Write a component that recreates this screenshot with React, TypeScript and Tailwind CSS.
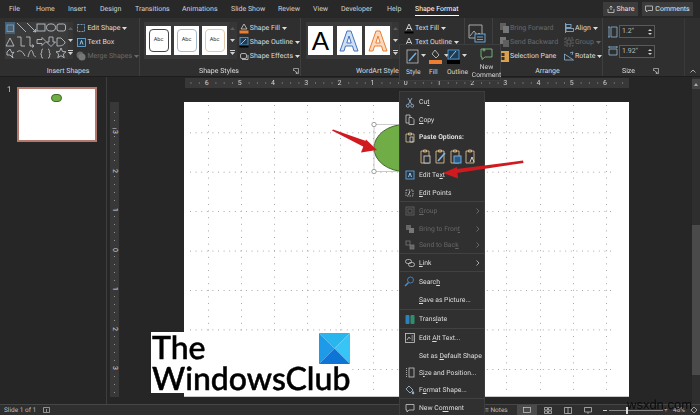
import React from "react";

const tabs = [
  { t: "File", c: "w-[36px] pl-[9px]" },
  { t: "Home", c: "w-[32px]" },
  { t: "Insert", c: "w-[32px]" },
  { t: "Design", c: "w-[35px]" },
  { t: "Transitions", c: "w-[47px]" },
  { t: "Animations", c: "w-[49px]" },
  { t: "Slide Show", c: "w-[47px]" },
  { t: "Review", c: "w-[35px]" },
  { t: "View", c: "w-[28px]" },
  { t: "Developer", c: "w-[46px]" },
  { t: "Help", c: "w-[28px]" },
];

function Gallery() {
  const s = "#b9c0c6";
  return (
    <svg width="63" height="37" viewBox="0 0 63 37" fill="none" stroke={s} strokeWidth="0.9">
      <rect x="0" y="0" width="10" height="12" fill="#4a5f70" stroke="none" />
      <rect x="2" y="3" width="6.5" height="6.5" stroke="#5ba3dc" />
      <path d="M12 1l9 9" />
      <path d="M22 1l9 9M31 10l-3-.6M31 10l-.6-3" />
      <rect x="32" y="2" width="8" height="7" />
      <ellipse cx="46" cy="5.5" rx="4.5" ry="3.6" />
      <rect x="52" y="2" width="8.5" height="7" rx="2" />
      <path d="M1 24l4-8 4 8z" />
      <path d="M12 15h4v9h4" />
      <path d="M21 15h4v9h4M29 24l-2-1.5M29 24l-2 1.5" />
      <path d="M32 17.5h5v-2l4 4-4 4v-2h-5z" />
      <path d="M44 15h4v5h2.5l-4.5 4.5L41.5 20H44z" />
      <path d="M52 24v-8h4l4 4v1c-2 3-5 3-8 3z" />
      <path d="M2 30l3-3 2 4 2-1-2 3 1 3-3-3-3 0z" />
      <path d="M12 30c2-2 5-2 8 4" />
      <path d="M23 35c2-8 4-8 5-4s2 3 3 4" />
      <path d="M38 27c-2 0-1 3-1.500 4s-1 1-1 1 1 0 1 1-.5 3 1.500 3" />
      <path d="M43 27c2 0 1 3 1.500 4s1 1 1 1-1 0-1 1 .5 3-1.500 3" />
      <path d="M56 26l1.500 3.500 3.500.3-2.700 2.300.9 3.600-3.200-2-3.200 2 .9-3.600-2.700-2.300 3.500-.3z" />
    </svg>
  );
}

function Scroller({ c = "" }: { c?: string }) {
  return (
    <div className={`flex flex-col ${c}`}>
      <div className="h-[12px] bg-[#363636] flex items-center justify-center">
        <svg width="5" height="3" viewBox="0 0 5 3"><path d="M0 3l2.500-3 2.500 3z" fill="#5c5c5c" /></svg>
      </div>
      <div className="h-[12px] bg-[#363636] flex items-center justify-center">
        <svg width="5" height="3" viewBox="0 0 5 3"><path d="M0 0l2.500 3 2.500-3z" fill="#d0d0d0" /></svg>
      </div>
      <div className="h-[13px] bg-[#363636] flex flex-col items-center justify-center gap-[1px]">
        <div className="w-[5px] h-[1px] bg-[#d0d0d0]" />
        <svg width="5" height="3" viewBox="0 0 5 3"><path d="M0 0l2.500 3 2.500-3z" fill="#d0d0d0" /></svg>
      </div>
    </div>
  );
}

function Caret() {
  return (
    <svg width="5" height="3" viewBox="0 0 5 3" className="ml-[2px] shrink-0"><path d="M0 0l2.500 3 2.500-3z" fill="currentColor" /></svg>
  );
}

function Launcher() {
  return (
    <svg width="6" height="6" viewBox="0 0 6 6" fill="none" stroke="#bdbdbd" strokeWidth="0.7">
      <path d="M.5 3V.5h5V5.500H3" /><path d="M1 2l3 3M4 3.500V5H2.500" />
    </svg>
  );
}

function Row({ icon, label, dim, caret, c = "" }: { icon: React.ReactNode; label: string; dim?: boolean; caret?: boolean; c?: string }) {
  return (
    <div className={`h-[14px] flex items-center whitespace-nowrap ${dim ? "text-[#6a6a6a]" : "text-[#dcdcdc]"} ${c}`}>
      <span className="w-[10px] h-[11px] flex items-center justify-center shrink-0 mr-[1px]">{icon}</span>
      {label}
      {caret && <Caret />}
    </div>
  );
}

const Paint = (
  <svg width="10" height="11" viewBox="0 0 10 11" fill="none" stroke="#cfcfcf" strokeWidth="0.8"><path d="M5 1l3 5H2z" /><rect x="0.500" y="7.500" width="9" height="3" fill="#ed7d31" stroke="none" /></svg>
);
const Pen = (
  <svg width="10" height="11" viewBox="0 0 10 11" fill="none" stroke="#cfcfcf" strokeWidth="0.8"><rect x="1" y="0.500" width="8" height="7.500" fill="#1f3c55" stroke="#5ba3dc" /><path d="M2 7l5-5" stroke="#cfe5f7" /><rect x="0.500" y="8.500" width="9" height="2" fill="#000" stroke="none" /></svg>
);
const Effects = (
  <svg width="10" height="10" viewBox="0 0 10 10" fill="none" stroke="#cfcfcf" strokeWidth="0.8"><rect x="1.500" y="2.500" width="6" height="5" rx="1.500" /><path d="M9 4v4.500H3" /></svg>
);
const AText = (
  <svg width="10" height="11" viewBox="0 0 10 11" fill="none" stroke="#d9d9d9" strokeWidth="0.9"><path d="M2 7.500L5 1l3 6.500M3 5.500h4" /><rect x="0.500" y="8.500" width="9" height="2" fill="#000" stroke="none" /></svg>
);

function Swatch({ children, c = "" }: { children: React.ReactNode; c?: string }) {
  return <div className={`w-[25px] h-[29px] bg-white flex items-center justify-center ${c}`}>{children}</div>;
}

function Abc({ c }: { c: string }) {
  return (
    <div className={`w-[20px] h-[23px] rounded-[4px] border-[1px] ${c} flex items-center justify-center text-[5.500px] text-[#333]`}>Abc</div>
  );
}

function HRuler() {
  const nums = ["6", "5", "4", "3", "2", "1", "0", "1", "2", "3", "4", "5", "6"];
  return (
    <div className="relative w-[444px] h-[10px] bg-[#383838] ml-[78px] mt-[1px] pl-[5px] flex items-center">
      <svg className="absolute inset-0" width="444" height="10">
        {Array.from({ length: 54 }, (_, i) => (
          <rect key={i} x={5.500 + i * 8.300} y={i % 4 === 2 ? 3 : 4.500} width="1" height={i % 4 === 2 ? 4 : 1} fill="#9d9d9d" />
        ))}
      </svg>
      {nums.map((n, i) => (
        <div key={i} className="relative w-[33.200px] flex justify-center text-[7px] leading-[10px] text-[#d5d5d5]">
          <span className="bg-[#383838] px-[1px]">{n}</span>
        </div>
      ))}
    </div>
  );
}

function VRuler() {
  const nums = ["3", "2", "1", "0", "1", "2", "3"];
  return (
    <div className="relative w-[9px] h-[295px] bg-[#383838] ml-[3px] pt-[10px] shrink-0">
      <svg className="absolute inset-0" width="9" height="295">
        {Array.from({ length: 36 }, (_, i) => (
          <rect key={i} y={10 + i * 8} x={i % 5 === 2 ? 2.500 : 4} height="1" width={i % 5 === 2 ? 4 : 1} fill="#8f8f8f" />
        ))}
      </svg>
      {nums.map((n, i) => (
        <div key={i} className="relative h-[39.400px] flex items-center justify-center text-[7px] text-[#d5d5d5]">
          <span className="rotate-90 bg-[#383838] px-[1px] leading-[8px]">{n}</span>
        </div>
      ))}
    </div>
  );
}

function SlideDots() {
  const cols = [24, 57, 90, 123, 156, 189, 223, 256, 289, 322, 356, 389, 422];
  const rows = [30.300, 69.700, 109, 148.600, 188, 227.400, 267];
  return (
    <svg className="absolute inset-0" width="445" height="295">
      {cols.map((x) =>
        Array.from({ length: 44 }, (_, i) => <rect key={`${x}-${i}`} x={x} y={3 + i * 6.600} width="1" height="1" fill="#a8a8a8" />)
      )}
      {rows.map((y) =>
        Array.from({ length: 76 }, (_, i) => <rect key={`${y}-${i}`} x={6 + i * 5.600} y={y} width="1" height="1" fill="#a8a8a8" />)
      )}
    </svg>
  );
}

const ic = { fill: "none", stroke: "#c9c9c9", strokeWidth: 0.8 } as const;
const menuIcons: Record<string, React.ReactNode> = {
  cut: <svg width="10" height="11" viewBox="0 0 10 11" {...ic} stroke="#9ab8d3"><path d="M3 1l3.500 6M7 1L3.500 7" /><circle cx="2.800" cy="8.800" r="1.500" /><circle cx="7.200" cy="8.800" r="1.500" /></svg>,
  copy: <svg width="10" height="11" viewBox="0 0 10 11" {...ic}><path d="M1 1h4v8H1z" /><path d="M4 3.500h3l2 2v5H4z" fill="#303030" /></svg>,
  paste: <svg width="10" height="11" viewBox="0 0 10 11" {...ic} stroke="#d9c59a"><path d="M1 2h8v8H1z" /><path d="M3.500 1h3v2h-3z" /><path d="M5 5h3v5H5z" stroke="#c9c9c9" /></svg>,
  edit: <svg width="10" height="10" viewBox="0 0 10 10" {...ic} stroke="#6fb0e4"><rect x="1" y="1" width="8" height="8" fill="#1d3a52" /><path d="M3.500 7L5 3l1.500 4" stroke="#ddd" /></svg>,
  points: <svg width="11" height="10" viewBox="0 0 11 10" {...ic}><path d="M2 2h7v6H2z" strokeDasharray="1.500 1" /><path d="M6 3L4.500 7" stroke="#e8e8e8" /></svg>,
  group: <svg width="10" height="10" viewBox="0 0 10 10" {...ic} stroke="#666"><rect x="1" y="1" width="8" height="8" /><rect x="3" y="3" width="4" height="4" /></svg>,
  front: <svg width="10" height="10" viewBox="0 0 10 10" fill="#666"><rect x="1" y="1" width="5" height="5" /><rect x="4" y="4" width="5" height="5" fill="#777" /></svg>,
  back: <svg width="10" height="10" viewBox="0 0 10 10" {...ic} stroke="#777"><rect x="1" y="1" width="4" height="4" /><rect x="5" y="5" width="4" height="4" fill="#666" /></svg>,
  link: <svg width="10" height="8" viewBox="0 0 10 8" {...ic}><rect x="0.500" y="0.500" width="6" height="4" rx="2" /><rect x="3.500" y="3.500" width="6" height="4" rx="2" /></svg>,
  search: <svg width="11" height="11" viewBox="0 0 11 11" {...ic} stroke="#4a90cf"><circle cx="6.500" cy="4" r="3" /><path d="M4.500 6.500L1 10" strokeWidth="1.400" /></svg>,
  translate: <svg width="10" height="11" viewBox="0 0 10 11"><rect x="0.500" y="1" width="4" height="9" rx="1" fill="#2f7fb8" /><rect x="5.500" y="1" width="4" height="9" rx="1" fill="#2f8f6a" /></svg>,
  alt: <svg width="10" height="10" viewBox="0 0 10 10" {...ic}><rect x="0.500" y="0.500" width="9" height="9" /><path d="M2 7l2-3 1.500 2" /><path d="M6.500 3h2M6.500 5h2M6.500 7h2" /></svg>,
  size: <svg width="10" height="11" viewBox="0 0 10 11" {...ic}><rect x="4" y="1" width="5" height="9" /><path d="M1.500 1v9" strokeDasharray="1 1" /></svg>,
  format: <svg width="10" height="10" viewBox="0 0 10 10" {...ic} stroke="#aac6de"><path d="M1 4l3-3 4 4-3 3z" /><path d="M8 6.500c1 1 1 2.500 0 2.500s-1-1.500 0-2.500z" fill="#aac6de" /></svg>,
  comment: <svg width="10" height="10" viewBox="0 0 10 10" {...ic}><path d="M1 1.500h8v5.500H4L2 9V7H1z" /></svg>,
};

function MItem({ h, icon, children, dim, arrow, bold, line }: { h: string; icon?: string; children: React.ReactNode; dim?: boolean; arrow?: boolean; bold?: boolean; line?: boolean }) {
  return (
    <div className={`${h} shrink-0 flex items-center pl-[4px] pr-[4px] whitespace-nowrap ${line ? "border-b border-[#414141]" : ""} ${dim ? "text-[#666]" : "text-[#dedede]"} ${bold ? "font-bold" : ""}`}>
      <span className="w-[11px] flex justify-center shrink-0 mr-[4px]">{icon && menuIcons[icon]}</span>
      <span className="flex-1 pt-[1px]">{children}</span>
      {arrow && (
        <svg width="4" height="6" viewBox="0 0 4 6" fill="none" stroke={dim ? "#777" : "#c8c8c8"} strokeWidth="0.8"><path d="M.5.5L3 3 .5 5.500" /></svg>
      )}
    </div>
  );
}

function Clip({ children }: { children: React.ReactNode }) {
  return (
    <svg width="12" height="15" viewBox="0 0 12 15" fill="none" stroke="#d9b98a" strokeWidth="0.9">
      <path d="M1 2h8v12H1z" /><path d="M3.500 1h3v2h-3z" />
      {children}
    </svg>
  );
}

export default function App() {
  return (
    <div className="relative w-[700px] h-[415px] overflow-hidden bg-[#262626] flex flex-col font-['Roboto','Liberation_Sans',sans-serif] text-[7px] leading-none [text-rendering:geometricPrecision]">
      <div className="absolute inset-0 flex flex-col blur-[0.3px]">
      {/* tabs */}
      <div className="h-[18px] bg-[#282828] flex items-center text-[#d2d2d2] shrink-0">
        {tabs.map((t) => (
          <div key={t.t} className={`shrink-0 whitespace-nowrap pt-[1px] ${t.c}`}>{t.t}</div>
        ))}
        <div className="relative shrink-0 whitespace-nowrap h-[18px] pt-[1px] flex items-center text-white">
          Shape Format
          <div className="absolute left-0 right-0 bottom-[2px] h-[1px] bg-white" />
        </div>
        <div className="ml-auto flex gap-[4px] pr-[7px]">
          <div className="w-[35px] h-[14px] bg-[#3c3c3c] flex items-center justify-center gap-[2px] text-[#e4e4e4]">
            <svg width="8" height="8" viewBox="0 0 8 8" fill="none" stroke="#ddd" strokeWidth="0.7"><path d="M1 4v3.500h6V4M4 5V1M2.500 2.500L4 1l1.500 1.500" /></svg>
            Share
          </div>
          <div className="w-[51px] h-[14px] bg-[#3c3c3c] flex items-center justify-center gap-[2px] text-[#e4e4e4]">
            <svg width="8" height="8" viewBox="0 0 8 8" fill="none" stroke="#ddd" strokeWidth="0.7"><path d="M.5 1h7v4.500H3L1.500 7V5.500h-1z" /></svg>
            Comments
          </div>
        </div>
      </div>

      {/* ribbon */}
      <div className="h-[59px] bg-[#2f2f2f] border-b border-[#1d1d1d] flex shrink-0 text-[#dcdcdc]">
        <div className="w-[140px] flex flex-col border-r border-[#3f3f3f]">
          <div className="h-[47px] flex pl-[5px] pt-[4px]">
            <div className="w-[63px] h-[37px] bg-[#3b3b3b]"><Gallery /></div>
            <Scroller c="w-[7px] mr-[3px]" />
            <div className="flex flex-col -mt-[1px]">
              <Row label="Edit Shape" caret icon={<svg width="10" height="10" viewBox="0 0 10 10" fill="none" stroke="#7db6e6" strokeWidth="0.8"><path d="M1.500 1.500h7v7h-7z" strokeDasharray="2 1" /></svg>} />
              <Row label="Text Box" icon={<svg width="9" height="9" viewBox="0 0 9 9" fill="#1d3a52" stroke="#6fb0e4" strokeWidth="0.8"><rect x="0.500" y="0.500" width="8" height="8" /><path d="M3 6.500L4.500 2.500 6 6.500" fill="none" stroke="#ddd" /></svg>} />
              <Row label="Merge Shapes" dim caret icon={<svg width="10" height="10" viewBox="0 0 10 10" fill="#666"><circle cx="4" cy="4" r="3.500" /><circle cx="6" cy="6" r="3.500" fill="#777" /></svg>} />
            </div>
          </div>
          <div className="h-[11px] pt-[1px] flex items-center justify-center pr-[3px] text-[#d8d8d8]">Insert Shapes</div>
        </div>

        <div className="w-[161px] flex flex-col border-r border-[#3f3f3f]">
          <div className="h-[47px] flex pl-[4px] pt-[4px]">
            <div className="w-[87px] h-[37px] bg-[#3b3b3b] flex items-center justify-between px-[2px]">
              <Swatch><Abc c="border-[#444]" /></Swatch>
              <Swatch><Abc c="border-[#a9b9c9]" /></Swatch>
              <Swatch><Abc c="border-[#e2c9ae]" /></Swatch>
            </div>
            <Scroller c="w-[8px] mr-[2px]" />
            <div className="flex flex-col -mt-[1px]">
              <Row label="Shape Fill" caret icon={Paint} />
              <Row label="Shape Outline" caret icon={Pen} />
              <Row label="Shape Effects" caret icon={Effects} />
            </div>
          </div>
          <div className="relative h-[11px] pt-[1px] flex items-center pl-[59px]">
            Shape Styles
            <div className="absolute right-[1px] top-[3px]"><Launcher /></div>
          </div>
        </div>

        <div className="w-[164px] flex flex-col border-r border-[#3f3f3f]">
          <div className="h-[47px] flex pl-[5px] pt-[4px]">
            <div className="w-[86px] h-[37px] bg-[#3b3b3b] flex items-center justify-between px-[2px]">
              <Swatch><span className="text-[26px] font-['Liberation_Sans',sans-serif] text-black">A</span></Swatch>
              <Swatch>
                <svg width="20" height="24" viewBox="0 0 20 24" fill="#cfe0f1" stroke="#4472c4" strokeWidth="1"><path d="M8 2h4l7 20h-4l-1.500-5h-7L5 22H1zM10 7l-2.200 7h4.400z" /></svg>
              </Swatch>
              <Swatch>
                <svg width="20" height="24" viewBox="0 0 20 24" fill="#f9d9c0" stroke="#ed7d31" strokeWidth="1"><path d="M8 2h4l7 20h-4l-1.500-5h-7L5 22H1zM10 7l-2.200 7h4.400z" /></svg>
              </Swatch>
            </div>
            <Scroller c="w-[7px] mr-[5px]" />
            <div className="flex flex-col -mt-[1px]">
              <Row label="Text Fill" caret icon={AText} />
              <Row label="Text Outline" caret icon={AText} />
            </div>
          </div>
          <div className="h-[11px] pt-[1px] flex items-center pl-[55px] whitespace-nowrap">WordArt Styles</div>
        </div>

        <div className="w-[28px] flex flex-col border-r border-[#3f3f3f] pl-[3px] pt-[6px]">
          <svg width="18" height="19" viewBox="0 0 18 19" fill="none" stroke="#b6b6b6" strokeWidth="0.9">
            <path d="M1 1h13v13H1z" /><path d="M2 12l4-5 3 4 2-2 3 3" /><rect x="7" y="10" width="10" height="8" fill="#2f2f2f" stroke="#6fb0e4" /><path d="M9 13h6M9 15.500h6" stroke="#6fb0e4" />
          </svg>
        </div>

        <div className="w-[110px] flex flex-col border-r border-[#3f3f3f]">
          <div className="h-[47px] flex pl-[6px] pt-[3px] gap-[12px]">
            <div className="flex flex-col w-[53px]">
              <Row dim label="Bring Forward" icon={<svg width="9" height="10" viewBox="0 0 9 10" fill="#5f5f5f"><rect y="0" width="6" height="7" /><rect x="3" y="3" width="6" height="7" fill="#777" /></svg>} />
              <Row dim label="Send Backward" icon={<svg width="9" height="10" viewBox="0 0 9 10" fill="#777"><rect y="0" width="6" height="7" /><rect x="3" y="3" width="6" height="7" fill="#5f5f5f" /></svg>} />
              <Row label="Selection Pane" icon={<svg width="9" height="11" viewBox="0 0 9 11" fill="#d7a14e"><rect width="9" height="11" /><rect x="1.500" y="2" width="3" height="3" fill="#2f2f2f" /><rect x="1.500" y="6" width="3" height="3" fill="#2f2f2f" /></svg>} />
            </div>
            <div className="flex flex-col">
              <Row label="Align" caret icon={<svg width="9" height="10" viewBox="0 0 9 10" fill="none" stroke="#8db7da" strokeWidth="0.8"><path d="M.5 0v10" /><rect x="1" y="1.500" width="5" height="3" /><rect x="1" y="5.500" width="7.500" height="3" /></svg>} />
              <Row dim label="Group" caret icon={<svg width="10" height="10" viewBox="0 0 10 10" fill="none" stroke="#6d6d6d" strokeWidth="0.8"><rect x="1" y="1" width="8" height="8" strokeDasharray="2 1" /><rect x="3" y="3" width="4" height="4" /></svg>} />
              <Row label="Rotate" caret icon={<svg width="10" height="10" viewBox="0 0 10 10" fill="none" stroke="#8db7da" strokeWidth="0.8"><path d="M.5 9h9L.5 3z" /><path d="M6 2l3-1-1 3" /></svg>} />
            </div>
          </div>
          <div className="h-[11px] pt-[1px] flex items-center justify-center">Arrange</div>
        </div>

        <div className="w-[82px] flex flex-col border-r border-[#3a3a3a]">
          <div className="h-[47px] flex flex-col pl-[5px] pt-[7px] gap-[7px]">
            {["1.2\"", "1.92\""].map((v, i) => (
              <div key={v} className="flex items-center gap-[1px]">
                <svg width="10" height="12" viewBox="0 0 10 12" fill="none" stroke="#8db7da" strokeWidth="0.8">
                  {i === 0 ? <path d="M3 1h6v10H3zM1 1v10M0 1h2M0 11h2" /> : <path d="M1 3h8v6H1zM1 1h8M1 0v2M9 0v2" />}
                </svg>
                <div className="w-[36px] h-[13px] border border-[#5a5a5a] bg-[#2b2b2b] flex items-center justify-between px-[2px] text-[#bdbdbd] text-[7px]">
                  {v}
                  <span className="flex flex-col gap-[2px]">
                    <svg width="4" height="2" viewBox="0 0 4 2"><path d="M0 2l2-2 2 2z" fill="#ccc" /></svg>
                    <svg width="4" height="2" viewBox="0 0 4 2"><path d="M0 0l2 2 2-2z" fill="#ccc" /></svg>
                  </span>
                </div>
              </div>
            ))}
          </div>
          <div className="relative h-[11px] pt-[1px] flex items-center pl-[19px]">
            Size
            <div className="absolute left-[50px] top-[3px]"><Launcher /></div>
          </div>
        </div>

        <div className="flex-1 flex items-end justify-center pb-[3px]">
          <svg width="6" height="4" viewBox="0 0 6 4" fill="none" stroke="#ccc" strokeWidth="0.8"><path d="M.5 3.500L3 1l2.500 2.500" /></svg>
        </div>
      </div>

      {/* main */}
      <div className="flex-1 min-h-0 flex">
        <div className="w-[107px] shrink-0 border-r border-[#3e3e3e] flex items-start pt-[10px] pl-[7px] gap-[5px]">
          <span className="text-[#c8c8c8] text-[8px] leading-[8px] -mt-[1px]">1</span>
          <div className="w-[80px] h-[55px] border-2 border-[#b4776b] bg-white flex justify-center pt-[5px]">
            <div className="w-[11px] h-[8px] rounded-full bg-[#70ad47] border-[0.5px] border-[#3e6b25]" />
          </div>
        </div>
        <div className="flex-1 min-w-0 flex flex-col">
          <HRuler />
          <div className="mt-[14px] flex items-start">
            <VRuler />
            <div className="relative w-[445px] h-[295px] ml-[65px] bg-white border-b border-[#c9c9c9] shrink-0">
              <SlideDots />
              <svg className="absolute left-[186px] top-[18px] overflow-visible" width="70" height="56" fill="none">
                <ellipse cx="35" cy="28" rx="31" ry="23.500" fill="#70ad47" stroke="#3f6b2a" strokeWidth="1" />
                <rect x="4" y="4.500" width="62" height="47" stroke="#a8a8a8" strokeWidth="0.6" />
                <circle cx="4" cy="4.500" r="2.200" fill="#fff" stroke="#777" strokeWidth="0.7" />
                <circle cx="4" cy="51.500" r="2.200" fill="#fff" stroke="#777" strokeWidth="0.7" />
              </svg>
            </div>
          </div>
        </div>
        <div className="w-[8px] shrink-0 bg-[#2e2e2e] flex flex-col items-center">
          <div className="h-[10px] mt-[2px] w-full bg-[#444] flex items-center justify-center">
            <svg width="4" height="3" viewBox="0 0 4 3"><path d="M0 3l2-3 2 3z" fill="#aaa" /></svg>
          </div>
          <div className="h-[150px] mt-[136px] w-full bg-[#4a4a4a]" />
        </div>
      </div>

      {/* status */}
      <div className="h-[11px] shrink-0 bg-[#2f2f2f] border-t border-[#474747] flex items-center text-[#bdbdbd] text-[6.500px]">
        <div className="w-[485px] pl-[4px] flex items-center shrink-0">
          <span className="w-[39px] whitespace-nowrap">Slide 1 of 1</span>
          <svg width="7" height="7" viewBox="0 0 7 7" fill="none" stroke="#bbb" strokeWidth="0.7"><path d="M.5.500h6v5h-6zM3.500 2v3" /></svg>
        </div>
        <span className="w-[32px] shrink-0 whitespace-nowrap">≡ Notes</span>
        <div className="w-[20px] h-[10px] bg-[#4a4a4a] flex items-center justify-center shrink-0">
          <svg width="8" height="6" viewBox="0 0 8 6" fill="none" stroke="#ccc" strokeWidth="0.7"><rect x="0.500" y="0.500" width="7" height="5" /></svg>
        </div>
        <svg width="8" height="7" viewBox="0 0 8 7" fill="none" stroke="#ccc" strokeWidth="0.7" className="ml-[7px] shrink-0"><path d="M.5.500h3v2.500h-3zM4.500.500h3v2.500h-3zM.5 4h3v2.500h-3zM4.500 4h3v2.500h-3z" /></svg>
        <svg width="8" height="7" viewBox="0 0 8 7" fill="none" stroke="#ccc" strokeWidth="0.7" className="ml-[12px] shrink-0"><path d="M.5.500h7v6h-7zM4 .5v6" /></svg>
        <svg width="8" height="7" viewBox="0 0 8 7" fill="none" stroke="#ccc" strokeWidth="0.7" className="ml-[12px] shrink-0"><path d="M.5.500h7v4.500h-7zM4 5v2" /></svg>
        <div className="ml-[11px] w-[4px] h-[1px] bg-[#ccc] shrink-0" />
        <div className="relative ml-[2px] w-[54px] h-[1px] bg-[#888] shrink-0">
          <div className="absolute left-[17px] -top-[3px] w-[2px] h-[7px] bg-[#ddd]" />
        </div>
        <div className="w-[5px] ml-[1px] shrink-0">+</div>
        <span className="ml-[4px] w-[12px] shrink-0 whitespace-nowrap">48%</span>
        <svg width="8" height="8" viewBox="0 0 8 8" fill="none" stroke="#ccc" strokeWidth="0.7" className="ml-[5px] shrink-0"><path d="M1 4l3-3 3 3-3 3z" /></svg>
      </div>

      {/* mini toolbar */}
      <div className="absolute left-[399px] top-[44px] w-[102px] h-[37px] bg-[#303030] border border-[#3e3e3e] flex text-[#d6d6d6] text-[6.700px] z-10">
        {[
          { l: "Style", w: "w-[24px] pl-[6px]", i: <svg width="14" height="15" viewBox="0 0 14 15" fill="none" stroke="#bfbfbf" strokeWidth="0.8"><rect x="1" y="1" width="11" height="13" /><path d="M3 12l7-8" stroke="#6fb0e4" strokeWidth="1.500" /></svg> },
          { l: "Fill", w: "w-[22px] pl-[5px]", i: <svg width="14" height="15" viewBox="0 0 14 15" fill="none" stroke="#cfcfcf" strokeWidth="0.8"><path d="M6 1l4 5-3 3-4-4z" /><rect x="0" y="11" width="13" height="4" fill="#ed7d31" stroke="none" /></svg> },
          { l: "Outline", w: "w-[27px] pl-[1px]", i: <svg width="14" height="15" viewBox="0 0 14 15" fill="none" stroke="#cfcfcf" strokeWidth="0.8"><rect x="1" y="1" width="11" height="9" fill="#1f3c55" stroke="#5ba3dc" /><path d="M3 9l6-7" stroke="#cfe5f7" /><rect x="0" y="11" width="13" height="4" fill="#000" stroke="none" /></svg> },
        ].map((b) => (
          <div key={b.l} className={`${b.w} flex flex-col`}>
            <div className="h-[22px] pt-[4px] flex items-start"><span>{b.i}</span><span className="mt-[5px] -ml-[1px]"><Caret /></span></div>
            <div className="mt-[2px] whitespace-nowrap">{b.l}</div>
          </div>
        ))}
        <div className="flex flex-col items-center w-[27px] pt-[3px]">
          <svg width="13" height="12" viewBox="0 0 13 12" fill="none" stroke="#7dbb7d" strokeWidth="0.9"><path d="M1 1h11v8H5l-3 2.500V9H1z" /><path d="M4 .5v3M2.500 2h3" /></svg>
          <span className="mt-[4px]">New</span>
          <span className="mt-[1px]">Comment</span>
        </div>
      </div>

      {/* context menu */}
      <div className="absolute left-[399px] top-[91px] w-[86px] h-[324px] bg-[#303030] border-l border-t border-r border-[#3d3d3d] flex flex-col z-10 pt-[1px] text-[6.800px]">
        <MItem h="h-[18px]" icon="cut">Cu<u>t</u></MItem>
        <MItem h="h-[17px]" icon="copy"><u>C</u>opy</MItem>
        <MItem h="h-[18px]" icon="paste" bold>Paste Options:</MItem>
        <div className="h-[20px] flex items-center pl-[20px] gap-[3px] shrink-0">
          <Clip><rect x="4" y="7" width="6" height="7" fill="#303030" stroke="#cfcfcf" /></Clip>
          <Clip><path d="M3 12l7-8" stroke="#7db6e6" strokeWidth="1.600" /></Clip>
          <Clip><rect x="4" y="7" width="7" height="7" fill="#2a5b86" stroke="#7db6e6" /></Clip>
          <Clip><path d="M5 13l2-5 2 5" stroke="#e3e3e3" /></Clip>
        </div>
        <MItem h="h-[18px]" icon="edit">Edit Te<u>x</u>t</MItem>
        <MItem h="h-[18px]" icon="points" line><u>E</u>dit Points</MItem>
        <MItem h="h-[18px]" icon="group" dim arrow><u>G</u>roup</MItem>
        <MItem h="h-[17px]" icon="front" dim arrow>Bring to Fron<u>t</u></MItem>
        <MItem h="h-[17px]" icon="back" dim arrow line>Send to Bac<u>k</u></MItem>
        <MItem h="h-[18px]" icon="link" arrow line><u>L</u>ink</MItem>
        <MItem h="h-[19px]" icon="search">Searc<u>h</u></MItem>
        <MItem h="h-[19px]" line><u>S</u>ave as Picture...</MItem>
        <MItem h="h-[19px]" icon="translate" line>Trans<u>l</u>ate</MItem>
        <MItem h="h-[18px]" icon="alt">Edit <u>A</u>lt Text...</MItem>
        <MItem h="h-[17px]">Set as <u>D</u>efault Shape</MItem>
        <MItem h="h-[17px]" icon="size">S<u>i</u>ze and Position...</MItem>
        <MItem h="h-[18px]" icon="format" line>F<u>o</u>rmat Shape...</MItem>
        <MItem h="h-[18px]" icon="comment">New Co<u>m</u>ment</MItem>
      </div>
      </div>

      {/* red arrows */}
      <svg className="absolute inset-0 z-20 pointer-events-none" width="700" height="415" fill="none">
        <path d="M332 130.500L333 129.500L366 141L364 147z" fill="#cf1a1f" />
        <path d="M377 150L361 152.500L366 139.500z" fill="#cf1a1f" />
        <path d="M523 160.500L523.500 163L457 173L456.500 169z" fill="#cf1a1f" />
        <path d="M443 173L457 167L458 178.500z" fill="#cf1a1f" />
      </svg>

      {/* logo */}
      <div className="absolute left-[151px] top-[332px] w-[199px] h-[61px] bg-white z-20 font-['Lato',sans-serif] font-medium text-black text-[32px] leading-[31px] pl-[1px] whitespace-nowrap [-webkit-text-stroke:0.5px_black]">
        <div className="-mt-[1px]">The</div>
        <div>WindowsClub</div>
        <svg className="absolute left-[168px] top-[1px]" width="31" height="31" viewBox="0 0 31 31">
          <path d="M0 0h31L15.500 15.500z" fill="#29b6ef" />
          <path d="M0 0l15.500 15.500L0 31z" fill="#1e9be8" />
          <path d="M31 0v31L15.500 15.500z" fill="#36c5f5" />
          <path d="M0 31l15.500-15.500L31 31z" fill="#0e74d6" />
        </svg>
      </div>

      <div className="absolute left-[627px] top-[398px] z-20 text-[13px] leading-[14px] font-['Liberation_Sans',sans-serif] text-[#0c0c0c]">wsxdn.com</div>
    </div>
  );
}
